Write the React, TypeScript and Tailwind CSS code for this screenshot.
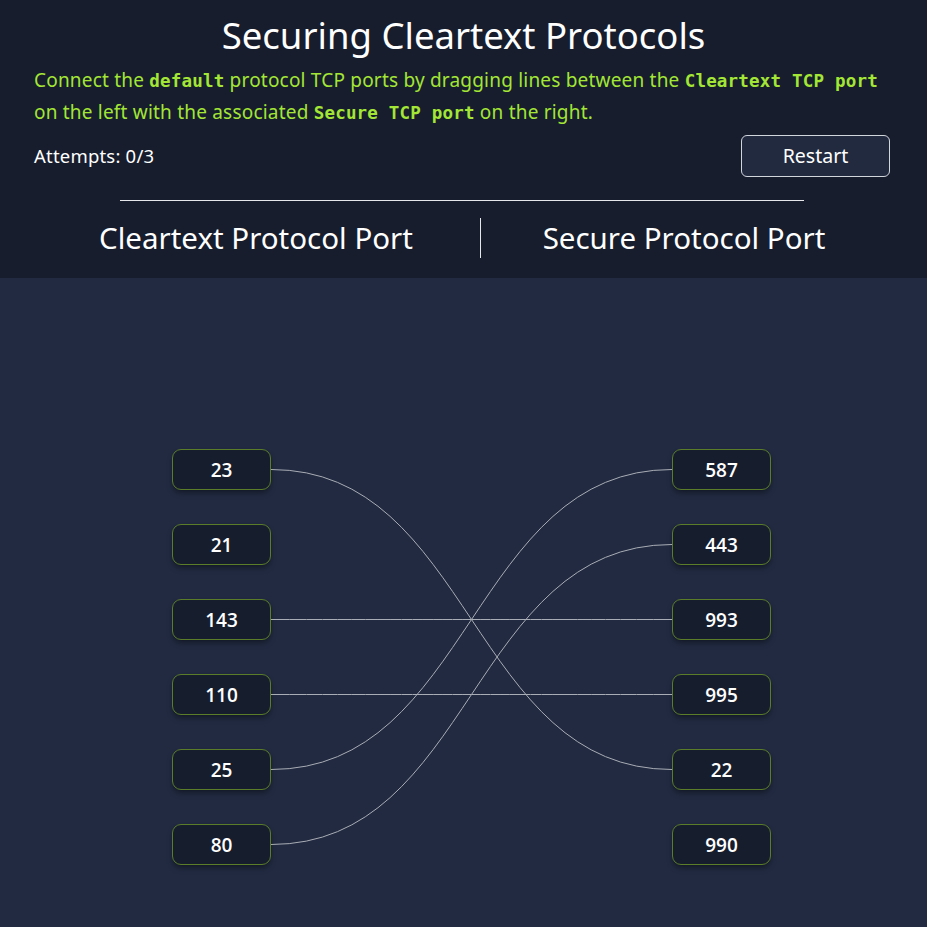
const left = ["23", "21", "143", "110", "25", "80"];
const right = ["587", "443", "993", "995", "22", "990"];

// pairs of [left index, right index]
const links: [number, number][] = [
  [0, 4],
  [2, 2],
  [3, 3],
  [4, 0],
  [5, 1],
];

const ROW = 75;
const BOX_H = 41;

function Port({ label }: { label: string }) {
  return (
    <div className="w-[99px] h-[41px] flex items-center justify-center rounded-[9px] border border-[#5b7d2a] bg-[#161d2d] text-white text-[19px] font-semibold shadow-md shadow-black/30 font-['Open_Sans',sans-serif]">
      {label}
    </div>
  );
}

function Code({ children }: { children: string }) {
  return (
    <code className="font-['DejaVu_Sans_Mono',monospace] font-bold text-[17.5px] whitespace-pre">
      {children}
    </code>
  );
}

export default function App() {
  return (
    <div className="min-h-[927px] bg-[#212a41] font-['Noto_Sans',sans-serif]">
      <header className="bg-[#171d2d] px-[34px] pt-[10px] pb-[18px]">
        <h1 className="text-center text-white text-[36.5px] leading-[50px]">
          Securing Cleartext Protocols
        </h1>
        <p className="mt-[5px] text-[#a3e635] text-[19px] leading-[31px] tracking-[0.2px] whitespace-nowrap">
          Connect the <Code>default</Code> protocol TCP ports by dragging lines between the{" "}
          <Code>Cleartext TCP port</Code>
          <br />
          on the left with the associated <Code>Secure TCP port</Code> on the right.
        </p>
        <div className="mt-[6px] flex items-center justify-between">
          <span className="text-white text-[18.5px] tracking-[0.2px]">Attempts: 0/3</span>
          <button className="w-[149px] h-[42px] rounded-md border border-gray-300 bg-[#222a40] text-white text-[19.5px] mr-[3px]">
            Restart
          </button>
        </div>
        <div className="ml-[86px] mr-[89px] mt-[23px] h-px bg-gray-200" />
        <div className="mt-[15px] flex items-center">
          <div className="w-[444px] text-center text-white text-[29.5px]">Cleartext Protocol Port</div>
          <div className="ml-[2px] w-px h-[40px] bg-gray-200" />
          <div className="ml-[1px] w-[404px] text-center text-white text-[29.5px]">
            Secure Protocol Port
          </div>
        </div>
      </header>

      <main className="pt-[171px] pl-[16px] flex justify-center">
        <div className="relative w-[599px] flex justify-between">
          <svg
            className="absolute inset-0 w-full h-full pointer-events-none"
            aria-hidden="true"
          >
            {links.map(([a, b], i) => {
              const y1 = a * ROW + BOX_H / 2;
              const y2 = b * ROW + BOX_H / 2;
              const x1 = 99;
              const x2 = 500;
              const mx = (x1 + x2) / 2;
              return (
                <path
                  key={i}
                  d={`M${x1} ${y1} C${mx} ${y1} ${mx} ${y2} ${x2} ${y2}`}
                  fill="none"
                  stroke="#a9adb5"
                  strokeWidth="1"
                />
              );
            })}
          </svg>
          <div className="flex flex-col gap-[34px]">
            {left.map((p) => (
              <Port key={p} label={p} />
            ))}
          </div>
          <div className="flex flex-col gap-[34px]">
            {right.map((p) => (
              <Port key={p} label={p} />
            ))}
          </div>
        </div>
      </main>
    </div>
  );
}
